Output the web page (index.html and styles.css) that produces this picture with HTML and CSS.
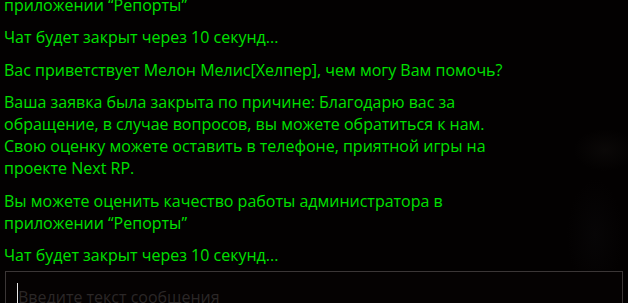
FILE: index.html
```html
<!DOCTYPE html>
<html lang="ru">
<head>
<meta charset="utf-8">
<link rel="stylesheet" href="styles.css">
</head>
<body>
<div class="screen">
  <div class="chat">
    <p class="msg">Вы можете оценить качество работы администратора в приложении “Репорты”</p>
    <p class="msg">Чат будет закрыт через 10 секунд...</p>
    <p class="msg">Вас приветствует Мелон Мелис[Хелпер], чем могу Вам помочь?</p>
    <p class="msg">Ваша заявка была закрыта по причине: Благодарю вас за обращение, в случае вопросов, вы можете обратиться к нам. Свою оценку можете оставить в телефоне, приятной игры на проекте Next RP.</p>
    <p class="msg">Вы можете оценить качество работы администратора в приложении “Репорты”</p>
    <p class="msg">Чат будет закрыт через 10 секунд...</p>
  </div>
  <div class="input"><span class="caret"></span><span class="placeholder">Введите текст сообщения</span></div>
</div>
</body>
</html>
```

FILE: styles.css
```css
html, body {
  margin: 0;
  padding: 0;
  background: #030101;
}
.screen {
  width: 628px;
  height: 303px;
  overflow: hidden;
  position: relative;
  font-family: "Open Sans", "Noto Sans", sans-serif;
  background:
    radial-gradient(ellipse 45px 30px at 605px 150px, rgba(55,50,45,0.14), transparent 70%),
    radial-gradient(ellipse 40px 80px at 595px 235px, rgba(25,24,28,0.18), transparent 70%),
    #030101;
}
.chat {
  height: 271px;
  box-sizing: border-box;
  padding: 0 20px 5px 4px;
  display: flex;
  flex-direction: column;
  justify-content: flex-end;
  overflow: hidden;
}
.msg {
  margin: 10.5px 0 0;
  flex-shrink: 0;
  color: #00e000;
  font-size: 16px;
  line-height: 22px;
  max-width: 510px;
}
.input {
  margin: 0 5px;
  height: 44px;
  box-sizing: border-box;
  border: 1px solid #3b3636;
  background: #050202;
  padding: 11px 0 0 11px;
  display: flex;
  align-items: flex-start;
}
.caret {
  width: 1px;
  height: 22px;
  background: #e8e8e8;
  flex-shrink: 0;
}
.placeholder {
  color: #2b2727;
  font-size: 16px;
  line-height: 22px;
  margin-top: 3px;
}
```
